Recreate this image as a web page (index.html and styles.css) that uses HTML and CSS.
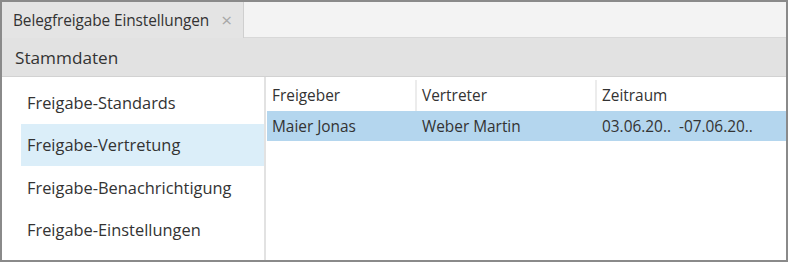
FILE: index.html
```html
<!DOCTYPE html>
<html lang="de">
<head>
<meta charset="utf-8">
<link rel="stylesheet" href="styles.css">
</head>
<body>
<div class="frame">
  <div class="tabstrip">
    <div class="tab">
      <span class="tab-title">Belegfreigabe Einstellungen</span>
      <span class="tab-close">×</span>
    </div>
    <div class="tab-rest"></div>
  </div>
  <div class="toolbar">Stammdaten</div>
  <div class="content">
    <ul class="nav">
      <li class="nav-item">Freigabe-Standards</li>
      <li class="nav-item selected">Freigabe-Vertretung</li>
      <li class="nav-item">Freigabe-Benachrichtigung</li>
      <li class="nav-item">Freigabe-Einstellungen</li>
    </ul>
    <div class="grid">
      <div class="row head">
        <div class="cell c1">Freigeber</div>
        <div class="cell c2">Vertreter</div>
        <div class="cell c3">Zeitraum</div>
      </div>
      <div class="row sel">
        <div class="cell c1">Maier Jonas</div>
        <div class="cell c2">Weber Martin</div>
        <div class="cell c3">03.06.20..&nbsp; -07.06.20..</div>
      </div>
    </div>
  </div>
</div>
</body>
</html>
```

FILE: styles.css
```css
* { box-sizing: border-box; }
html, body { margin: 0; padding: 0; background: #ffffff; }
body { font-family: "Open Sans", "Noto Sans", sans-serif; color: #333333; }

.frame {
  width: 788px;
  height: 262px;
  border: 2px solid #8a8a8a;
  display: flex;
  flex-direction: column;
  background: #ffffff;
  overflow: hidden;
}

.tabstrip {
  height: 36px;
  display: flex;
  background: #f3f3f3;
  border-bottom: 1px solid #d8d8d8;
  flex: none;
}
.tab {
  width: 242px;
  height: 36px;
  background: #e4e4e4;
  border-right: 1px solid #cfcfcf;
  display: flex;
  align-items: center;
  padding-left: 11px;
  margin-bottom: -1px;
}
.tab-title { font-size: 15.4px; color: #333; letter-spacing: -0.1px; }
.tab-close { margin-left: 12px; color: #a8a8a8; font-size: 19px; line-height: 1; }
.tab-rest { flex: 1; }

.toolbar {
  height: 39px;
  background: #e2e2e2;
  border-bottom: 1px solid #d2d2d2;
  display: flex;
  align-items: center;
  padding-left: 13px;
  font-size: 17.2px;
  color: #333;
  flex: none;
}

.content { flex: 1; display: flex; }

.nav {
  list-style: none;
  margin: 0;
  padding: 4px 0 0 19px;
  width: 264px;
  border-right: 2px solid #e2e2e2;
  flex: none;
}
.nav-item {
  height: 42.5px;
  display: flex;
  align-items: center;
  padding-left: 6px;
  font-size: 16.4px;
  color: #333;
}
.nav-item.selected { background: #dbeef9; }

.grid { flex: 1; padding: 3px 0 0 1px; }
.row { display: flex; }
.row.head { height: 31px; }
.row.sel { height: 30px; background: #b4d6ee; }
.cell {
  display: flex;
  align-items: center;
  padding-left: 5px;
  font-size: 15.4px;
  color: #333;
  white-space: nowrap;
}
.head .cell { border-right: 2px solid #ececec; }
.head .c3 { border-right: none; }
.c1 { width: 150px; }
.c2 { width: 180px; }
.c3 { flex: 1; }
```
